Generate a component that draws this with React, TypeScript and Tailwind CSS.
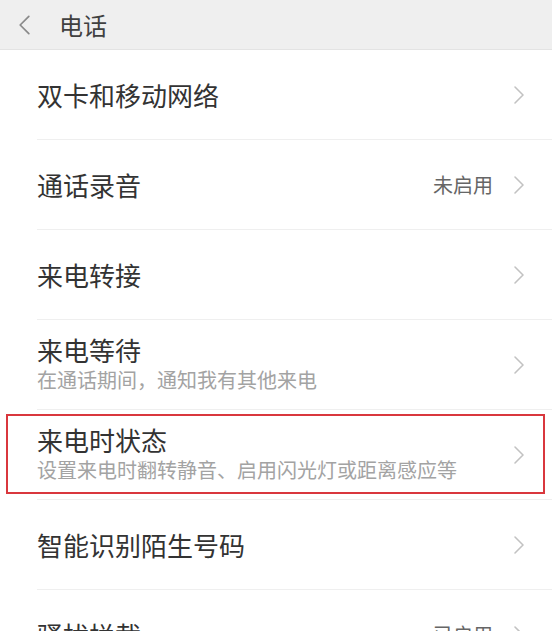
import React from "react";

type Row = {
  title: string;
  subtitle?: string;
  value?: string;
  highlighted?: boolean;
};

const rows: Row[] = [
  { title: "双卡和移动网络" },
  { title: "通话录音", value: "未启用" },
  { title: "来电转接" },
  { title: "来电等待", subtitle: "在通话期间，通知我有其他来电" },
  {
    title: "来电时状态",
    subtitle: "设置来电时翻转静音、启用闪光灯或距离感应等",
    highlighted: true,
  },
  { title: "智能识别陌生号码" },
  { title: "骚扰拦截", value: "已启用" },
];

function Chevron({ dir = "right", className = "" }: { dir?: "left" | "right"; className?: string }) {
  const d = dir === "right" ? "M2 2 L10 10 L2 18" : "M10 2 L2 10 L10 18";
  return (
    <svg viewBox="0 0 12 20" className={className} fill="none">
      <path d={d} stroke="currentColor" strokeWidth="1.6" strokeLinecap="round" strokeLinejoin="round" />
    </svg>
  );
}

export default function App() {
  return (
    <div className="w-[552px] h-[631px] overflow-hidden bg-white font-['Noto_Sans_CJK_SC',sans-serif]">
      <div className="h-[50px] flex items-center bg-[#efefef] border-b border-[#e3e3e3]">
        <Chevron dir="left" className="ml-[18px] w-[13px] h-[22px] text-[#8a8a8a]" />
        <span className="ml-[28px] text-[24px] text-[#404040] leading-none">电话</span>
      </div>

      {rows.map((row) => (
        <div key={row.title} className="relative h-[90px] pl-[37px]">
          <div className="h-full flex items-center border-b border-[#efefef] pr-[27px]">
            <div className="flex-1 flex flex-col">
              <span className="text-[26px] leading-[30px] text-[#333]">{row.title}</span>
              {row.subtitle && (
                <span className="text-[20px] leading-[30px] text-[#a3a3a3]">{row.subtitle}</span>
              )}
            </div>
            {row.value && (
              <span className="text-[20px] text-[#666] mr-[20px]">{row.value}</span>
            )}
            <Chevron className="w-[12px] h-[20px] text-[#c2c2c2]" />
          </div>
          {row.highlighted && (
            <div className="absolute left-[6px] right-[7px] top-[4px] bottom-[6px] border-2 border-[#d9373d]" />
          )}
        </div>
      ))}
    </div>
  );
}
